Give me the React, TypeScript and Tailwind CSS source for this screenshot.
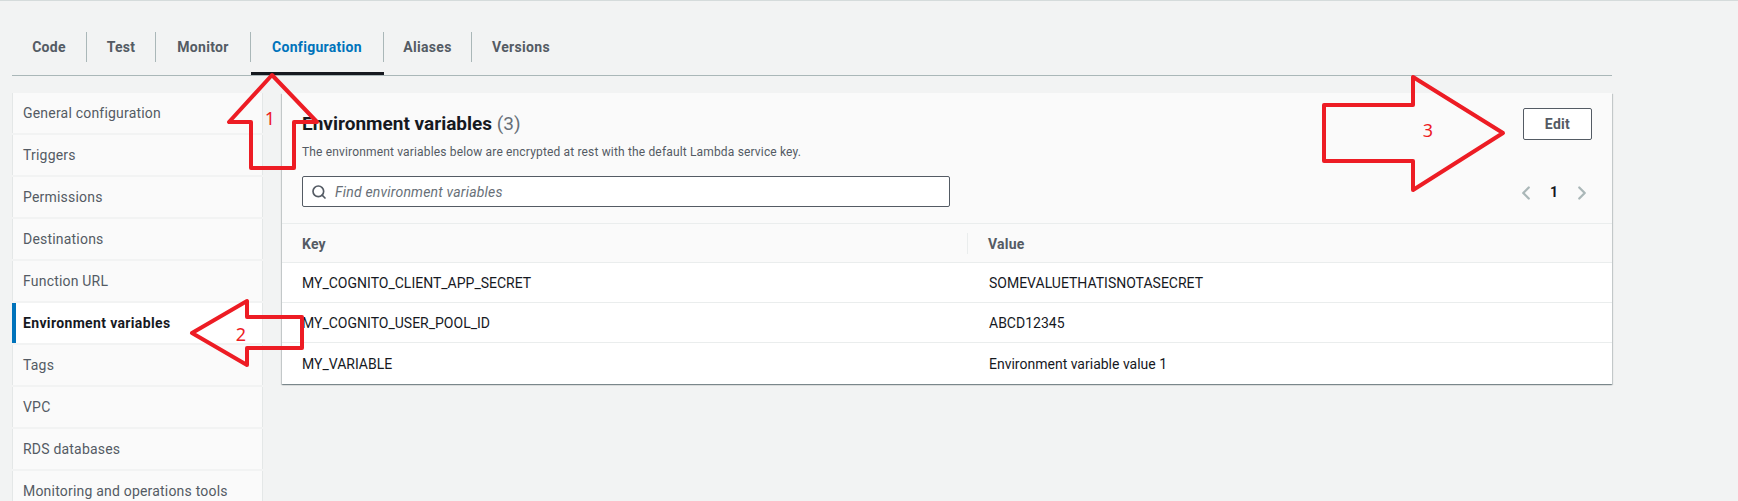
import React from 'react';
import { Search, ChevronLeft, ChevronRight } from 'lucide-react';

const TABS = [
  { label: 'Code', width: 'w-[75px]' },
  { label: 'Test', width: 'w-[69px]' },
  { label: 'Monitor', width: 'w-[95px]' },
  { label: 'Configuration', width: 'w-[133px]' },
  { label: 'Aliases', width: 'w-[88px]' },
  { label: 'Versions', width: 'w-[98px]' },
];

const MENU = [
  'General configuration',
  'Triggers',
  'Permissions',
  'Destinations',
  'Function URL',
  'Environment variables',
  'Tags',
  'VPC',
  'RDS databases',
  'Monitoring and operations tools',
];

const ROWS = [
  ['MY_COGNITO_CLIENT_APP_SECRET', 'SOMEVALUETHATISNOTASECRET'],
  ['MY_COGNITO_USER_POOL_ID', 'ABCD12345'],
  ['MY_VARIABLE', 'Environment variable value 1'],
];

// The red arrows were drawn on top of the screenshot
function Annotations() {
  return (
    <svg className="absolute left-0 top-0 pointer-events-none" width="1738" height="501">
      <g fill="none" stroke="#ed1c24" strokeWidth="4" strokeLinejoin="round">
        <path d="M272 74 L229 121 L251 121 L251 167 L294 167 L294 121 L317 121 Z" />
        <path d="M192 332 L247 300 L247 316 L302 316 L302 347 L247 347 L247 364 Z" />
        <path d="M1503 132 L1413 76 L1413 104 L1324 104 L1324 160 L1413 160 L1413 189 Z" />
      </g>
      <g fill="#ed1c24" fontSize="18" textAnchor="middle" fontFamily="'Noto Sans', sans-serif">
        <text x="270" y="124">1</text>
        <text x="241" y="340">2</text>
        <text x="1428" y="136">3</text>
      </g>
    </svg>
  );
}

export default function App() {
  return (
    <div className="relative h-[501px] w-[1738px] overflow-hidden bg-[#f2f3f3] border-t border-[#d5dbdb] font-['Roboto',sans-serif] text-[14px] text-[#16191f]">
      <div className="w-[1600px] ml-3 pt-[31px]">
        {/* Tabs */}
        <div className="flex h-[44px] border-b border-[#aab7b8]">
          {TABS.map((tab, i) => (
            <div key={tab.label} className={`relative h-[43px] ${tab.width}`}>
              <div
                className={`flex items-center justify-center h-[30px] font-bold tracking-[0.3px] ${i === 3 ? 'text-[#0073bb]' : 'text-[#545b64]'} ${i < TABS.length - 1 ? 'border-r border-[#aab7b8]' : ''}`}
              >
                {tab.label}
              </div>
              {i === 3 && <div className="absolute left-0 right-0 bottom-0 h-[3px] bg-[#16191f]" />}
            </div>
          ))}
        </div>

        <div className="flex mt-[17px] gap-[19px]">
          {/* Side menu */}
          <div className="w-[251px] shrink-0 flex flex-col gap-[2px]">
            {MENU.map((item, i) => (
              <div
                key={item}
                className={`h-[40px] shrink-0 flex items-center border-x border-[#e4e7e7] ${
                  i === 5
                    ? 'bg-white font-bold tracking-[0.35px] text-[#16191f] border-l-4 border-l-[#0073bb] pl-[7px]'
                    : 'bg-[#fafafa] tracking-[0.2px] text-[#545b64] pl-[10px]'
                }`}
              >
                {item}
              </div>
            ))}
          </div>

          {/* Environment variables panel */}
          <div className="flex-1 self-start bg-white shadow-[0_1px_1px_0_rgba(0,28,36,0.3),1px_1px_1px_0_rgba(0,28,36,0.15),-1px_1px_1px_0_rgba(0,28,36,0.15)]">
            <div className="h-[131px] bg-[#fafafa] border-b border-[#eaeded] px-5">
              <div className="flex justify-between">
                <div>
                  <h2 className="pt-[18px] text-[19px] leading-[26px] font-bold">
                    Environment variables <span className="font-normal text-[#687078]">(3)</span>
                  </h2>
                  <p className="mt-[7px] text-[12px] leading-4 tracking-[0.16px] text-[#545b64]">
                    The environment variables below are encrypted at rest with the default Lambda service key.
                  </p>
                </div>
                <button className="mt-[15px] h-[32px] w-[69px] bg-white border border-[#545b64] rounded-[2px] font-bold tracking-[0.3px] text-[#545b64]">
                  Edit
                </button>
              </div>
              <div className="flex justify-between items-center mt-[16px]">
                <div className="w-[648px] h-[31px] bg-white border border-[#545b64] rounded-[2px] flex items-center pl-[8px] gap-[8px]">
                  <Search size={16} className="text-[#545b64]" strokeWidth={2.5} />
                  <span className="italic tracking-[0.2px] pt-[2px] text-[#687078]">Find environment variables</span>
                </div>
                <div className="flex items-center gap-[13px] -mr-[1px] pt-[2px]">
                  <ChevronLeft size={22} className="text-[#aab7b8]" strokeWidth={2.5} />
                  <span className="font-bold text-[#16191f]">1</span>
                  <ChevronRight size={22} className="text-[#aab7b8]" strokeWidth={2.5} />
                </div>
              </div>
            </div>

            <div className="flex h-[39px] items-center bg-[#fafafa] border-b border-[#eaeded] font-bold tracking-[0.2px] text-[#545b64]">
              <div className="w-[686px] pl-5 border-r border-[#eaeded] h-[21px] flex items-center pt-[2px]">Key</div>
              <div className="pl-5 pt-[2px]">Value</div>
            </div>
            {ROWS.map(([k, v], i) => (
              <div
                key={k}
                className={`flex items-center pt-[2px] ${i < ROWS.length - 1 ? 'h-[40px] border-b border-[#eaeded]' : 'h-[41px]'}`}
              >
                <div className="w-[687px] pl-5">{k}</div>
                <div className="pl-5">{v}</div>
              </div>
            ))}
          </div>
        </div>
      </div>
      <Annotations />
    </div>
  );
}
